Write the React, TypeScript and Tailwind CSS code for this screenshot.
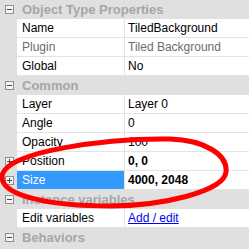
import React from "react";

type Row =
  | { kind: "cat"; label: string; open: boolean }
  | {
      kind: "prop";
      name: string;
      value: string;
      muted?: boolean;
      bold?: boolean;
      link?: boolean;
      selected?: boolean;
      expand?: boolean;
    };

const rows: Row[] = [
  { kind: "cat", label: "Object Type Properties", open: true },
  { kind: "prop", name: "Name", value: "TiledBackground" },
  { kind: "prop", name: "Plugin", value: "Tiled Background", muted: true },
  { kind: "prop", name: "Global", value: "No" },
  { kind: "cat", label: "Common", open: true },
  { kind: "prop", name: "Layer", value: "Layer 0" },
  { kind: "prop", name: "Angle", value: "0" },
  { kind: "prop", name: "Opacity", value: "100" },
  { kind: "prop", name: "Position", value: "0, 0", bold: true, expand: true },
  { kind: "prop", name: "Size", value: "4000, 2048", bold: true, expand: true, selected: true },
  { kind: "cat", label: "Instance variables", open: true },
  { kind: "prop", name: "Edit variables", value: "Add / edit", link: true },
  { kind: "cat", label: "Behaviors", open: true },
];

function Toggle({ open }: { open: boolean }) {
  return (
    <svg width="9" height="9" viewBox="0 0 9 9" className="block">
      <rect x="0.5" y="0.5" width="8" height="8" fill="#f4f4f4" stroke="#8e8f8f" />
      <line x1="2" y1="4.5" x2="7" y2="4.5" stroke="#4a4a4a" />
      {!open && <line x1="4.5" y1="2" x2="4.5" y2="7" stroke="#4a4a4a" />}
    </svg>
  );
}

export default function App() {
  return (
    <div
      className="relative h-[249px] w-[249px] overflow-hidden bg-[#e0e0e0] text-[12px] leading-none"
      style={{ fontFamily: '"Liberation Sans", Arial, sans-serif' }}
    >
      <div className="flex flex-col">
        {rows.map((r, i) =>
          r.kind === "cat" ? (
            <div key={i} className="flex h-[19px] items-center bg-[#e0e0e0]">
              <div className="flex w-[17px] justify-center pl-[1px]">
                <Toggle open={r.open} />
              </div>
              <span className="pl-[5px] text-[13px] font-bold text-[#a6a6a6]">{r.label}</span>
            </div>
          ) : (
            <div key={i} className="flex h-[19px]">
              <div className="flex w-[17px] items-center justify-center pl-[1px]">
                {r.expand && <Toggle open={false} />}
              </div>
              <div
                className={
                  r.selected
                    ? "flex w-[107px] items-center border-b border-[#e3e3e3] bg-[#3399ff] pl-[5px] text-white"
                    : r.muted
                      ? "flex w-[107px] items-center border-b border-[#e3e3e3] bg-white pl-[5px] text-[#6d6d6d]"
                      : "flex w-[107px] items-center border-b border-[#e3e3e3] bg-white pl-[5px] text-black"
                }
              >
                {r.name}
              </div>
              <div
                className={
                  "flex flex-1 items-center border-b border-l border-[#e3e3e3] bg-white pl-[3px] " +
                  (r.muted ? "text-[#6d6d6d]" : "text-black") +
                  (r.bold ? " font-bold" : "")
                }
              >
                {r.link ? (
                  <span className="text-[#0000ff] underline">{r.value}</span>
                ) : (
                  r.value
                )}
              </div>
            </div>
          )
        )}
      </div>

      {/* hand drawn highlight */}
      <svg
        className="pointer-events-none absolute left-0 top-0"
        width="249"
        height="249"
        viewBox="0 0 249 249"
      >
        <path
          d="M 2,177 C 2,151 110,138 170,139 C 205,140 228,155 226,172 C 224,192 160,206 110,206 C 50,206 2,196 2,177 Z"
          fill="none"
          stroke="#ff0000"
          strokeWidth="5"
        />
      </svg>
    </div>
  );
}
